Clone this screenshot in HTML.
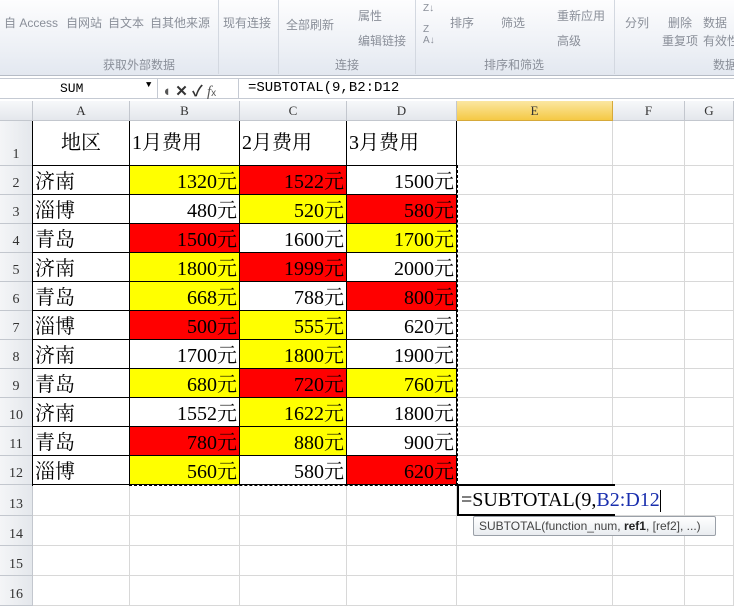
<!DOCTYPE html>
<html><head><meta charset="utf-8"><style>
*{margin:0;padding:0;box-sizing:border-box}
body{width:734px;height:592px;overflow:hidden;background:#fff;position:relative;font-family:"Liberation Sans","Noto Sans CJK SC",sans-serif}
.rib{position:absolute;left:0;top:0;width:734px;height:76px;background:linear-gradient(#fdfdfe,#eef1f6 60%,#e3e8f0);border-bottom:1px solid #b6bcc6}
.rib span{position:absolute;font-size:12px;color:#8a8f99;white-space:nowrap}
.sep{position:absolute;top:0;width:1px;height:74px;background:#d3d8e0}
.fb{position:absolute;left:0;top:78px;width:734px;height:21px;background:#fff;border-top:1px solid #c5cad3;border-bottom:1px solid #c5cad3}
.g{position:absolute;left:0;top:101px;display:grid;grid-template-columns:33px 97px 110px 107px 110px 156px 72px 49px;grid-template-rows:20px 45px repeat(11,29px) 31px 30px 30px 30px;font-family:"Liberation Serif","Noto Serif CJK SC",serif}
.g>div{border-right:1px solid #d8d8d8;border-bottom:1px solid #d8d8d8;font-size:20px;white-space:nowrap;overflow:hidden;padding:2px 2px 0;line-height:28px}
.g>div.h{background:linear-gradient(#f7f8fa,#e4e7ec);border-color:#c3c7ce;font-size:13px;text-align:center;color:#333;line-height:19px;padding:0}
.g>div.e{background:linear-gradient(#fbe7a2,#f5c945);border-color:#d6a93a}
.g>div.n{background:linear-gradient(90deg,#f4f5f7,#e4e7ec);border-color:#c3c7ce;font-size:14px;text-align:center;color:#333;padding:0;display:flex;align-items:flex-end;justify-content:center;line-height:20px}
.g>div.b{border-color:#000}
.r{text-align:right}
.g>div.y{background:#ffff00}.g>div.x{background:#ff0000}
.g>div.t{line-height:44px;padding-top:0}
</style></head><body>
<div class="rib">
<span style="left:4px;top:14px">自 Access</span><span style="left:66px;top:14px">自网站</span><span style="left:108px;top:14px">自文本</span><span style="left:150px;top:14px">自其他来源</span>
<span style="left:223px;top:14px">现有连接</span><span style="left:286px;top:16px">全部刷新</span><span style="left:358px;top:7px">属性</span><span style="left:358px;top:32px">编辑链接</span>
<span style="left:450px;top:14px">排序</span><span style="left:501px;top:14px">筛选</span><span style="left:557px;top:7px">重新应用</span><span style="left:557px;top:32px">高级</span>
<span style="left:625px;top:14px">分列</span><span style="left:668px;top:14px">删除</span><span style="left:662px;top:32px">重复项</span><span style="left:703px;top:14px">数据</span><span style="left:703px;top:32px">有效性</span>
<span style="left:103px;top:56px">获取外部数据</span><span style="left:335px;top:56px">连接</span><span style="left:484px;top:56px">排序和筛选</span><span style="left:713px;top:56px">数据</span>
<span style="left:423px;top:3px;font-size:10px">Z↓</span><span style="left:423px;top:24px;font-size:10px">Z<br>A↓</span>
<div class="sep" style="left:218px"></div><div class="sep" style="left:278px"></div><div class="sep" style="left:415px"></div><div class="sep" style="left:614px"></div>
</div>
<div class="fb">
<div style="position:absolute;left:0;top:0;width:158px;height:19px;border-right:1px solid #c5cad3;font:13px 'Liberation Mono',monospace;padding:2px 0 0 60px">SUM<span style="position:absolute;left:146px;top:1px;font-size:9px">▼</span></div>
<div style="position:absolute;left:162px;top:1px;font-size:15px;color:#555">◖ <b style="color:#333">✕ ✓</b> <i style="font-family:'Liberation Serif'">f</i><span style="font-size:10px">x</span></div>
<div style="position:absolute;left:238px;top:0;height:19px;border-left:1px solid #c5cad3;font:14px 'Liberation Mono',monospace;padding:1px 0 0 9px">=SUBTOTAL(9,B2:D12</div>
</div>
<div class="g">
<div class="h"></div><div class="h">A</div><div class="h">B</div><div class="h">C</div><div class="h">D</div><div class="h e">E</div><div class="h">F</div><div class="h">G</div>
<div class="n">1</div><div class="b t" style="text-align:center">地区</div><div class="b t">1月费用</div><div class="b t">2月费用</div><div class="b t">3月费用</div><div></div><div></div><div></div>
<div class="n">2</div><div class="b">济南</div><div class="b r y">1320元</div><div class="b r x">1522元</div><div class="b r">1500元</div><div></div><div></div><div></div>
<div class="n">3</div><div class="b">淄博</div><div class="b r">480元</div><div class="b r y">520元</div><div class="b r x">580元</div><div></div><div></div><div></div>
<div class="n">4</div><div class="b">青岛</div><div class="b r x">1500元</div><div class="b r">1600元</div><div class="b r y">1700元</div><div></div><div></div><div></div>
<div class="n">5</div><div class="b">济南</div><div class="b r y">1800元</div><div class="b r x">1999元</div><div class="b r">2000元</div><div></div><div></div><div></div>
<div class="n">6</div><div class="b">青岛</div><div class="b r y">668元</div><div class="b r">788元</div><div class="b r x">800元</div><div></div><div></div><div></div>
<div class="n">7</div><div class="b">淄博</div><div class="b r x">500元</div><div class="b r y">555元</div><div class="b r">620元</div><div></div><div></div><div></div>
<div class="n">8</div><div class="b">济南</div><div class="b r">1700元</div><div class="b r y">1800元</div><div class="b r">1900元</div><div></div><div></div><div></div>
<div class="n">9</div><div class="b">青岛</div><div class="b r y">680元</div><div class="b r x">720元</div><div class="b r y">760元</div><div></div><div></div><div></div>
<div class="n">10</div><div class="b">济南</div><div class="b r">1552元</div><div class="b r y">1622元</div><div class="b r">1800元</div><div></div><div></div><div></div>
<div class="n">11</div><div class="b">青岛</div><div class="b r x">780元</div><div class="b r y">880元</div><div class="b r">900元</div><div></div><div></div><div></div>
<div class="n">12</div><div class="b">淄博</div><div class="b r y">560元</div><div class="b r">580元</div><div class="b r x">620元</div><div></div><div></div><div></div>
<div class="n">13</div><div></div><div></div><div></div><div></div><div></div><div></div><div></div>
<div class="n">14</div><div></div><div></div><div></div><div></div><div></div><div></div><div></div>
<div class="n">15</div><div></div><div></div><div></div><div></div><div></div><div></div><div></div>
<div class="n">16</div><div></div><div></div><div></div><div></div><div></div><div></div><div></div>
</div>
<div style="position:absolute;left:32px;top:121px;width:1px;height:365px;background:#000"></div>
<div style="position:absolute;left:129px;top:165px;width:329px;height:321px;border:1px dashed #000;pointer-events:none"></div>
<div style="position:absolute;left:457px;top:484px;width:158px;height:32px;border:2px solid #000;border-right:none;background:#fff;font:20px 'Liberation Serif','Noto Serif CJK SC',serif;padding:3px 0 0 2px;white-space:nowrap">=SUBTOTAL(9,<span style="color:#1a2fae">B2:D12</span><span style="display:inline-block;width:1px;height:22px;background:#000;vertical-align:middle"></span></div>
<div style="position:absolute;left:473px;top:516px;width:243px;height:20px;border:1px solid #9aa0a8;border-radius:2px;background:linear-gradient(#fff,#e9ecf0);font-size:12px;color:#444;padding:2px 0 0 5px;white-space:nowrap">SUBTOTAL(function_num, <b style="color:#222">ref1</b>, [ref2], ...)</div>
</body></html>
